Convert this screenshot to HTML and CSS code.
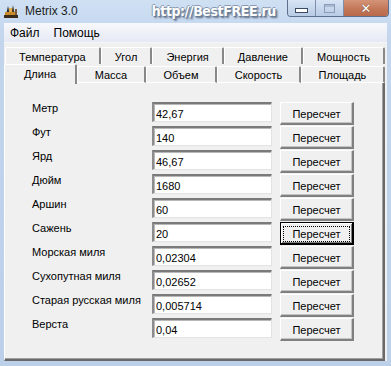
FILE: index.html
```html
<!DOCTYPE html>
<html>
<head>
<meta charset="utf-8">
<link rel="stylesheet" href="styles.css">
</head>
<body>
<div class="window">
  <div class="titlebar">
    <svg class="appicon" width="16" height="16" viewBox="0 0 16 16">
      <rect x="1" y="12" width="14" height="3" fill="#3a2a1a"/>
      <path d="M3 12 L5 3 L7 12 Z" fill="#2b2b3a"/>
      <path d="M8 12 L10 2 L12 12 Z" fill="#4a3a2a"/>
      <rect x="2" y="9" width="12" height="3" fill="#c98a2a"/>
      <rect x="6" y="5" width="3" height="4" fill="#e0b050"/>
      <rect x="12" y="6" width="2" height="6" fill="#7a5a3a"/>
    </svg>
    <span class="title">Metrix 3.0</span>
    <span class="watermark">http://BestFREE.ru</span>
    <div class="caption-buttons">
      <div class="cbtn min"><span class="min-glyph"></span></div>
      <div class="cbtn max"><span class="max-glyph"></span></div>
      <div class="cbtn close">✕</div>
    </div>
  </div>
  <div class="client">
    <div class="menubar">
      <span class="menu-item">Файл</span>
      <span class="menu-item">Помощь</span>
    </div>
    <div class="tabs">
      <div class="tabrow back">
        <div class="tab">Температура</div>
        <div class="tab">Угол</div>
        <div class="tab">Энергия</div>
        <div class="tab">Давление</div>
        <div class="tab">Мощность</div>
      </div>
      <div class="tabrow front">
        <div class="tab selected">Длина</div>
        <div class="tab">Масса</div>
        <div class="tab">Объем</div>
        <div class="tab">Скорость</div>
        <div class="tab">Площадь</div>
      </div>
    </div>
    <div class="panel">
      <div class="grid">
        <div class="label">Метр</div><input class="field" value="42,67"><button class="btn">Пересчет</button>
        <div class="label">Фут</div><input class="field" value="140"><button class="btn">Пересчет</button>
        <div class="label">Ярд</div><input class="field" value="46,67"><button class="btn">Пересчет</button>
        <div class="label">Дюйм</div><input class="field" value="1680"><button class="btn">Пересчет</button>
        <div class="label">Аршин</div><input class="field" value="60"><button class="btn">Пересчет</button>
        <div class="label">Сажень</div><input class="field" value="20"><button class="btn focused"><span class="focus-rect">Пересчет</span></button>
        <div class="label">Морская миля</div><input class="field" value="0,02304"><button class="btn">Пересчет</button>
        <div class="label">Сухопутная миля</div><input class="field" value="0,02652"><button class="btn">Пересчет</button>
        <div class="label">Старая русская миля</div><input class="field" value="0,005714"><button class="btn">Пересчет</button>
        <div class="label">Верста</div><input class="field" value="0,04"><button class="btn">Пересчет</button>
      </div>
    </div>
  </div>
</div>
</body>
</html>
```
FILE: styles.css
```css
html, body {
  margin: 0;
  padding: 0;
  background: #c6d8ee;
}
.window {
  width: 391px;
  height: 366px;
  box-sizing: border-box;
  background: linear-gradient(#cfe0f3, #c2d5ed 40px, #bcd0ea);
  display: flex;
  flex-direction: column;
  font-family: "Liberation Sans", Arial, sans-serif;
  font-size: 11px;
  color: #000;
  overflow: hidden;
}
.titlebar {
  height: 23px;
  display: flex;
  align-items: center;
  position: relative;
  padding-left: 3px;
}
.appicon {
  margin-right: 6px;
  margin-top: -2px;
}
.title {
  font-size: 12px;
  color: #1e1e1e;
  margin-top: -1px;
}
.watermark {
  margin-left: 74px;
  margin-top: -2px;
  font-family: "DejaVu Sans Condensed", "DejaVu Sans", sans-serif;
  font-weight: bold;
  font-size: 14px;
  letter-spacing: -0.4px;
  color: #fdfdfd;
  text-shadow: 1px 1px 0 #6b7d96, -1px 0 0 #8a9ab0, 0 -1px 0 #8a9ab0, 2px 2px 2px #5a6a80;
}
.caption-buttons {
  position: absolute;
  top: 0;
  right: 2px;
  display: flex;
  height: 16px;
  border: 1px solid #5c6f8c;
  border-top: none;
  border-radius: 0 0 4px 4px;
  overflow: hidden;
}
.cbtn {
  height: 16px;
  display: flex;
  align-items: center;
  justify-content: center;
}
.min, .max {
  width: 27px;
  background: linear-gradient(#d7e4f4, #b8cbe4);
  border-right: 1px solid #7d8fab;
}
.min-glyph {
  width: 11px;
  height: 3px;
  background: #fff;
  border: 1px solid #3a4a64;
  margin-top: 4px;
}
.max-glyph {
  width: 9px;
  height: 7px;
  border: 1px solid #8a9cb8;
  box-shadow: inset 0 2px 0 #a9bad2;
}
.close {
  width: 44px;
  background: linear-gradient(#d49478, #c27655 60%, #b8694a);
  color: #fff;
  font-family: "DejaVu Sans", sans-serif;
  font-weight: bold;
  font-size: 13px;
  text-shadow: 0 0 1px #4a2a1a;
}
.client {
  flex: 1;
  margin: 0 4px 5px 4px;
  background: #f0f0f0;
  display: flex;
  flex-direction: column;
}
.menubar {
  height: 20px;
  display: flex;
  align-items: center;
  background: linear-gradient(#f7f8fc, #e6e9f4);
  border-bottom: 1px solid #f4f6fa;
  padding-left: 6px;
  box-sizing: border-box;
}
.menu-item {
  font-size: 12px;
  margin-right: 14px;
  margin-top: 1px;
}
.tabs {
  margin-top: 4px;
  display: flex;
  flex-direction: column;
}
.tabrow {
  display: flex;
  height: 17px;
  padding-right: 2px;
}
.tabrow.back {
  padding-left: 1px;
}
.tabrow.front {
  height: 19px;
  padding-left: 0;
}
.tab {
  flex: 1 1 auto;
  text-align: center;
  box-sizing: border-box;
  padding: 2px 4px 0;
  border-top: 1px solid #fff;
  border-left: 1px solid #fff;
  border-right: 2px solid #888;
  border-radius: 2px 2px 0 0;
  background: #f0f0f0;
  white-space: nowrap;
  line-height: 14px;
  font-size: 11px;
}
.tabrow.front .tab {
  margin-top: 2px;
  padding-top: 1px;
  border-bottom: 1px solid #fff;
}
.tabrow.front .tab.selected {
  margin-top: 0;
  padding-top: 2px;
  border-bottom: none;
  flex-grow: 0;
  flex-basis: 73px;
  position: relative;
  z-index: 1;
  height: 20px;
}
.panel {
  flex: 1;
  margin-right: 2px;
  border-left: 1px solid #fff;
  border-right: 2px solid #696969;
  border-bottom: 2px solid #696969;
  box-shadow: inset -1px -1px 0 #a0a0a0;
  padding: 19px 0 0 27px;
  box-sizing: border-box;
}
.grid {
  display: grid;
  grid-template-columns: 120px 120px 74px;
  column-gap: 0;
  grid-auto-rows: 24px;
  align-items: start;
}
.label {
  font-size: 11px;
  line-height: 15px;
  margin-top: -1px;
  white-space: nowrap;
}
.field {
  width: 120px;
  height: 20px;
  box-sizing: border-box;
  margin: 0;
  padding: 3px 2px 0 2px;
  font-family: "Liberation Sans", Arial, sans-serif;
  font-size: 11px;
  color: #000;
  background: #fff;
  border-style: solid;
  border-width: 2px 1px 1px 2px;
  border-color: #7a7a7a #e3e3e3 #e3e3e3 #8c8c8c;
  box-shadow: inset 1px 1px 0 #b8b8b8;
  outline: none;
}
.btn {
  margin-left: 8px;
  width: 74px;
  height: 23px;
  box-sizing: border-box;
  padding: 2px 0 0 0;
  font-family: "Liberation Sans", Arial, sans-serif;
  font-size: 11px;
  color: #000;
  background: #f0f0f0;
  border-style: solid;
  border-width: 1px 2px 2px 1px;
  border-color: #fff #808080 #808080 #fff;
  box-shadow: inset -1px -1px 0 #c4c4c4;
  cursor: default;
}
.btn.focused {
  border: 1px solid #000;
  border-right-width: 2px;
  border-bottom-width: 2px;
  box-shadow: inset 1px 1px 0 #fff, inset -1px -1px 0 #808080;
  padding: 2px 2px 1px 2px;
}
.focus-rect {
  display: block;
  border: 1px dotted #000;
  line-height: 13px;
  padding-top: 1px;
}
```
